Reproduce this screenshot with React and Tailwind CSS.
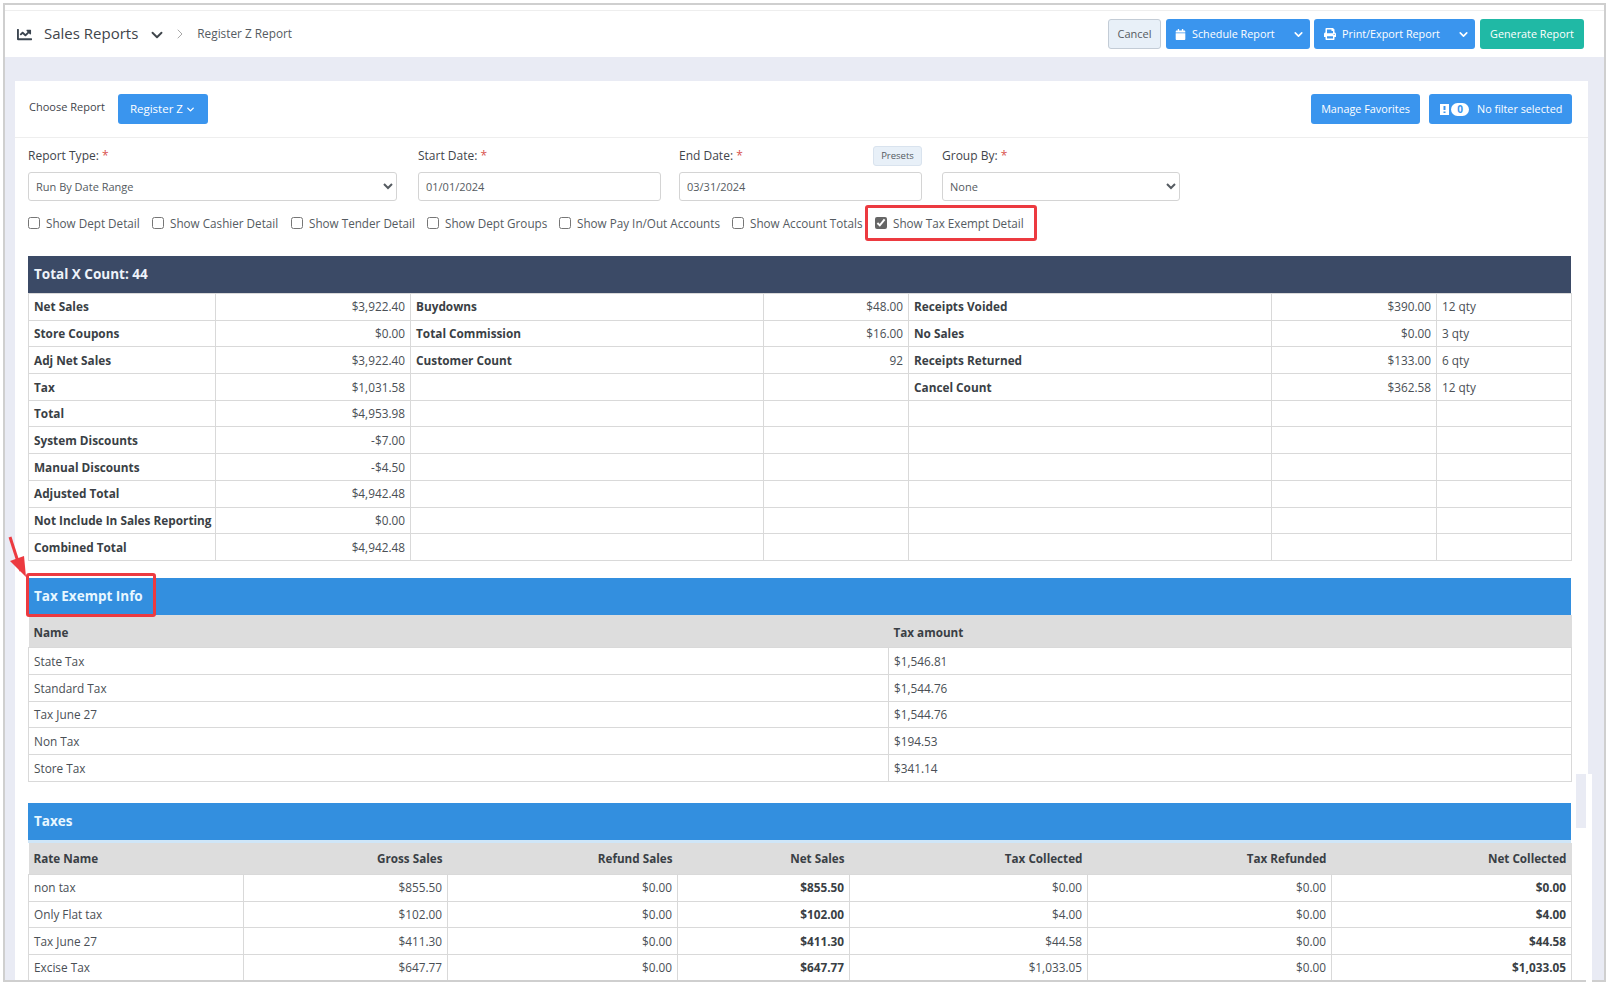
import React from "react";
import { FaChartLine, FaCalendar, FaPrint } from "react-icons/fa";
import { ChevronDown, ChevronRight } from "lucide-react";

const Req = () => <span className="text-[#d9534f]"> *</span>;

const summary = [
  ["Net Sales", "$3,922.40", "Buydowns", "$48.00", "Receipts Voided", "$390.00", "12 qty"],
  ["Store Coupons", "$0.00", "Total Commission", "$16.00", "No Sales", "$0.00", "3 qty"],
  ["Adj Net Sales", "$3,922.40", "Customer Count", "92", "Receipts Returned", "$133.00", "6 qty"],
  ["Tax", "$1,031.58", "", "", "Cancel Count", "$362.58", "12 qty"],
  ["Total", "$4,953.98", "", "", "", "", ""],
  ["System Discounts", "-$7.00", "", "", "", "", ""],
  ["Manual Discounts", "-$4.50", "", "", "", "", ""],
  ["Adjusted Total", "$4,942.48", "", "", "", "", ""],
  ["Not Include In Sales Reporting", "$0.00", "", "", "", "", ""],
  ["Combined Total", "$4,942.48", "", "", "", "", ""],
];
const exempt = [
  ["State Tax", "$1,546.81"],
  ["Standard Tax", "$1,544.76"],
  ["Tax June 27", "$1,544.76"],
  ["Non Tax", "$194.53"],
  ["Store Tax", "$341.14"],
];
const taxes = [
  ["non tax", "$855.50", "$0.00", "$855.50", "$0.00", "$0.00", "$0.00"],
  ["Only Flat tax", "$102.00", "$0.00", "$102.00", "$4.00", "$0.00", "$4.00"],
  ["Tax June 27", "$411.30", "$0.00", "$411.30", "$44.58", "$0.00", "$44.58"],
  ["Excise Tax", "$647.77", "$0.00", "$647.77", "$1,033.05", "$0.00", "$1,033.05"],
];
const checks = [
  ["Show Dept Detail", "w-[124px]"],
  ["Show Cashier Detail", "w-[139px]"],
  ["Show Tender Detail", "w-[136px]"],
  ["Show Dept Groups", "w-[132px]"],
  ["Show Pay In/Out Accounts", "w-[173px]"],
  ["Show Account Totals", "w-[143px]"],
];

const cell = "border border-[#d9d9d9] px-[5px] pt-[1px] pb-0 text-[11.8px] leading-none whitespace-nowrap";
const strong = "font-bold text-[#3a3f45] text-[11.7px]";
const btn = "h-[30px] rounded-[3px] bg-[#3a95ee] text-white text-[10.8px] flex items-center whitespace-nowrap";
const label = "h-[26px] mb-[3px] flex items-center text-[12px] text-[#3f454b]";
const field = "w-full h-[29px] rounded-[3px] border border-[#d4d4d4] bg-white text-[11px] text-[#555b61]";

export default function App() {
  return (
    <div className="relative w-[1608px] h-[985px] bg-white overflow-hidden text-[#4a4f55] font-['Open_Sans',sans-serif]">
      <div className="relative ml-[3px] mt-[3px] w-[1603px] h-[979px] border-2 border-[#cfcfcf] bg-[#e9ebf4] flex flex-col overflow-hidden">
        <header className="h-[52px] shrink-0 bg-white pt-[5px]">
          <div className="h-[47px] border-t border-[#eeeeee] flex items-center pl-[12px] pr-[20px]">
            <FaChartLine className="text-[15px] text-[#3b4550]" />
            <span className="ml-[12px] -mt-[1px] text-[15px] text-[#3f454b]">Sales Reports</span>
            <ChevronDown size={18} strokeWidth={2.5} className="ml-[10px] mt-[2px] text-[#3f454b]" />
            <ChevronRight size={16} strokeWidth={1.5} className="ml-[6px] text-[#a8a8a8]" />
            <span className="ml-[9px] text-[11.8px] text-[#555b61]">Register Z Report</span>
            <div className="ml-auto flex items-center">
              <button className="h-[30px] w-[53px] rounded-[3px] bg-[#e8f0f8] border border-[#c3ccd6] text-[11px] text-[#555b61]">Cancel</button>
              <div className={`${btn} ml-[5px] w-[144px] pl-[9px]`}>
                <FaCalendar className="text-[11px]" />
                <span className="ml-[6px]">Schedule Report</span>
                <ChevronDown size={13} strokeWidth={3} className="ml-auto mr-[5px]" />
              </div>
              <div className={`${btn} ml-[4px] w-[161px] pl-[10px]`}>
                <FaPrint className="text-[12px]" />
                <span className="ml-[6px]">Print/Export Report</span>
                <ChevronDown size={13} strokeWidth={3} className="ml-auto mr-[5px]" />
              </div>
              <button className="ml-[5px] h-[30px] w-[104px] rounded-[3px] bg-[#20b9a5] text-white text-[10.8px]">Generate Report</button>
            </div>
          </div>
        </header>
        <div className="flex-1 pl-[10px] pt-[24px] min-h-0">
          <div className="w-[1573px] h-full bg-white overflow-hidden">
            <div className="h-[57px] border-b border-[#eeeeee] flex items-center pl-[14px] pr-[16px]">
              <span className="text-[11px] text-[#3f454b] -mt-[3px]">Choose Report</span>
              <button className="ml-[13px] h-[30px] w-[90px] rounded-[3px] bg-[#3a95ee] text-white text-[11.5px] flex items-center justify-center">
                Register Z<ChevronDown size={11} strokeWidth={3} className="ml-[2px]" />
              </button>
              <button className={`${btn} ml-auto w-[109px] justify-center`}>Manage Favorites</button>
              <div className={`${btn} ml-[9px] w-[143px] pl-[11px]`}>
                <svg width="9" height="11" viewBox="0 0 9 11"><path fillRule="evenodd" fill="#fff" d="M0 0h9v11H0zM3.5 2v4h2V2zM3.5 7.5v1.5h2V7.5z" /></svg>
                <span className="ml-[2px] w-[18px] h-[13px] rounded-full bg-white text-[#3a95ee] text-[10px] font-bold leading-[13px] text-center">0</span>
                <span className="ml-[8px]">No filter selected</span>
              </div>
            </div>

            <div className="pl-[13px]">
              <div className="flex gap-[19px] pt-[5px]">
                <div className="w-[371px] pr-[2px]">
                  <div className={label}><span>Report Type:<Req /></span></div>
                  <select defaultValue="a" className={`${field} pl-[3px] leading-none pb-[1px]`}>
                    <option value="a">Run By Date Range</option>
                  </select>
                </div>
                <div className="w-[243px]">
                  <div className={label}><span>Start Date:<Req /></span></div>
                  <input readOnly value="01/01/2024" className={`${field} px-[7px] pb-[1px]`} />
                </div>
                <div className="w-[243px] -ml-[1px]">
                  <div className={`${label} justify-between`}>
                    <span>End Date:<Req /></span>
                    <button className="h-[20px] w-[49px] rounded-[3px] bg-[#e8f0f8] border border-[#d9e3ee] text-[9.5px] text-[#555b61]">Presets</button>
                  </div>
                  <input readOnly value="03/31/2024" className={`${field} px-[7px] pb-[1px]`} />
                </div>
                <div className="w-[238px] ml-[1px]">
                  <div className={label}><span>Group By:<Req /></span></div>
                  <select defaultValue="n" className={`${field} pl-[3px] leading-none pb-[1px]`}>
                    <option value="n">None</option>
                  </select>
                </div>
              </div>

              <div className="mt-[11px] h-[24px] flex items-center text-[11.7px] text-[#555b61]">
                {checks.map(([t, w]) => (
                  <label key={t} className={`${w} shrink-0 flex items-center whitespace-nowrap`}>
                    <input type="checkbox" className="m-0 w-[12px] h-[12px] -mt-[2px]" />
                    <span className="ml-[6px]">{t}</span>
                  </label>
                ))}
                <label className="relative flex items-center whitespace-nowrap">
                  <input type="checkbox" defaultChecked className="m-0 w-[12px] h-[12px] -mt-[2px] accent-[#666666]" />
                  <span className="ml-[6px]">Show Tax Exempt Detail</span>
                  <span className="absolute -left-[10px] -right-[13px] -top-[10px] -bottom-[8px] border-[3px] border-[#ec3a40] rounded-[3px]" />
                </label>
              </div>

              <div className="mt-[20px] w-[1543px]">
                <div className="h-[37px] bg-[#3b4a66] text-[#eef3fa] font-bold text-[13.5px] flex items-center pl-[6px] pb-[1px]">Total X Count: 44</div>
                <table className="w-[1544px] table-fixed border-collapse">
                  <colgroup>
                    <col className="w-[187px]" /><col className="w-[195px]" /><col className="w-[353px]" /><col className="w-[145px]" /><col className="w-[363px]" /><col className="w-[165px]" /><col />
                  </colgroup>
                  <tbody>
                    {summary.map((r, i) => (
                      <tr key={i} className="h-[26.7px]">
                        {r.map((c, j) => (
                          <td key={j} className={`${cell} ${j === 6 ? "" : j % 2 ? "text-right" : strong}`}>{c}</td>
                        ))}
                      </tr>
                    ))}
                  </tbody>
                </table>

                <div className="relative mt-[17px] h-[37px] bg-[#338fdf] text-[#e8f7ff] font-bold text-[13.5px] flex items-center pl-[6px] pb-[1px]">
                  Tax Exempt Info
                  <span className="absolute -left-[2px] -top-[5px] -bottom-[2px] w-[130px] border-[3px] border-[#ec3a40] rounded-[3px]" />
                </div>
                <table className="w-[1544px] table-fixed border-collapse">
                  <colgroup><col className="w-[860px]" /><col /></colgroup>
                  <thead>
                    <tr className="h-[33px] bg-[#dddddd] text-[#3a3f45]">
                      <th className="px-[5px] pt-[3px] text-left text-[11.7px] font-bold">Name</th>
                      <th className="px-[5px] pt-[3px] text-left text-[11.7px] font-bold">Tax amount</th>
                    </tr>
                  </thead>
                  <tbody>
                    {exempt.map((r) => (
                      <tr key={r[0]} className="h-[26.7px]">
                        <td className={cell}>{r[0]}</td>
                        <td className={cell}>{r[1]}</td>
                      </tr>
                    ))}
                  </tbody>
                </table>

                <div className="mt-[21px] h-[37px] bg-[#338fdf] text-[#e8f7ff] font-bold text-[13.5px] flex items-center pl-[6px]">Taxes</div>
                <div className="h-[3px] bg-[#cfe6f8]" />
                <table className="w-[1544px] table-fixed border-collapse">
                  <colgroup>
                    <col className="w-[215px]" /><col className="w-[204px]" /><col className="w-[230px]" /><col className="w-[172px]" /><col className="w-[238px]" /><col className="w-[244px]" /><col />
                  </colgroup>
                  <thead>
                    <tr className="h-[31.5px] bg-[#dddddd] text-[#3a3f45] text-[11.7px] font-bold">
                      {["Rate Name", "Gross Sales", "Refund Sales", "Net Sales", "Tax Collected", "Tax Refunded", "Net Collected"].map((h, i) => (
                        <th key={h} className={`px-[5px] font-bold ${i ? "text-right" : "text-left"}`}>{h}</th>
                      ))}
                    </tr>
                  </thead>
                  <tbody>
                    {taxes.map((r) => (
                      <tr key={r[0]} className="h-[26.7px]">
                        {r.map((c, j) => (
                          <td key={j} className={`${cell} ${j ? "text-right" : ""} ${j === 3 || j === 6 ? strong : ""}`}>{c}</td>
                        ))}
                      </tr>
                    ))}
                  </tbody>
                </table>
              </div>
            </div>
          </div>
        </div>
      </div>
      <svg className="absolute left-[7px] top-[535px]" width="22" height="44" viewBox="0 0 22 44">
        <path d="M3 2 L14 36" stroke="#ec3a40" strokeWidth="3" fill="none" />
        <path d="M19 42 L3 26 L17 21 Z" fill="#ec3a40" />
      </svg>
      <div className="absolute left-[1576px] top-[774px] w-[10px] h-[54px] bg-[#e9ebf4]" />
      <div className="absolute left-[1586px] top-[774px] w-[6px] h-[208px] bg-white" />
    </div>
  );
}
